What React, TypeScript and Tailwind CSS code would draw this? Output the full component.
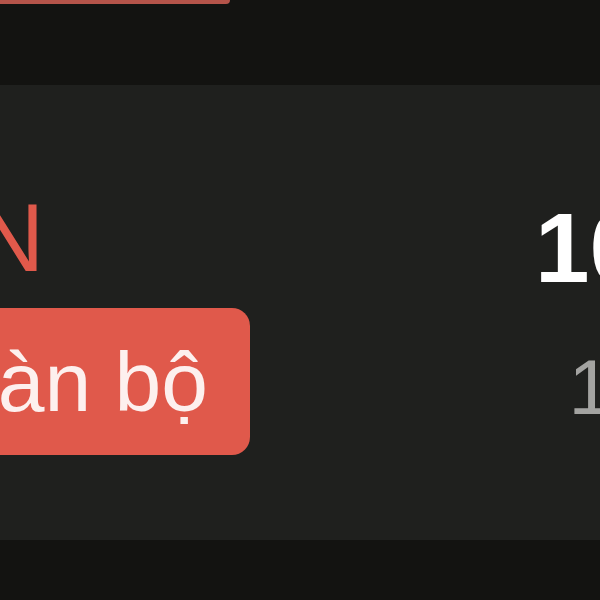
import React from 'react';

const font = { fontFamily: '"Liberation Sans", Arial, sans-serif' };

const App = () => {
  return (
    <div className="w-[600px] h-[600px] overflow-hidden bg-[#131311] flex flex-col" style={font}>
      {/* previous section */}
      <div className="h-[85px] shrink-0">
        <div className="h-[4px] w-[230px] bg-[#b4544a] rounded-br-md" />
      </div>

      {/* filter panel */}
      <div className="h-[455px] shrink-0 bg-[#1f201e] flex flex-col pt-[102px]">
        <div className="flex items-start justify-between h-[96px]">
          <span className="mt-[3px] ml-[-25px] text-[96px] leading-none text-[#e0594b]">N</span>
          <span className="mt-[12px] mr-[-44px] text-[98px] leading-none font-bold text-white">10</span>
        </div>
        <div className="flex items-center justify-between mt-[25px]">
          <button className="ml-[-133px] h-[147px] pl-[42px] pr-[42px] rounded-[18px] bg-[#e0594b] text-[84px] leading-none text-[#fdf0ee]">
            Toàn bộ
          </button>
          <span className="mt-[10px] mr-[-12px] text-[78px] leading-none text-[#a3a3a1]">1</span>
        </div>
      </div>

      <div className="flex-1 bg-[#131311]" />
    </div>
  );
};

export default App;
